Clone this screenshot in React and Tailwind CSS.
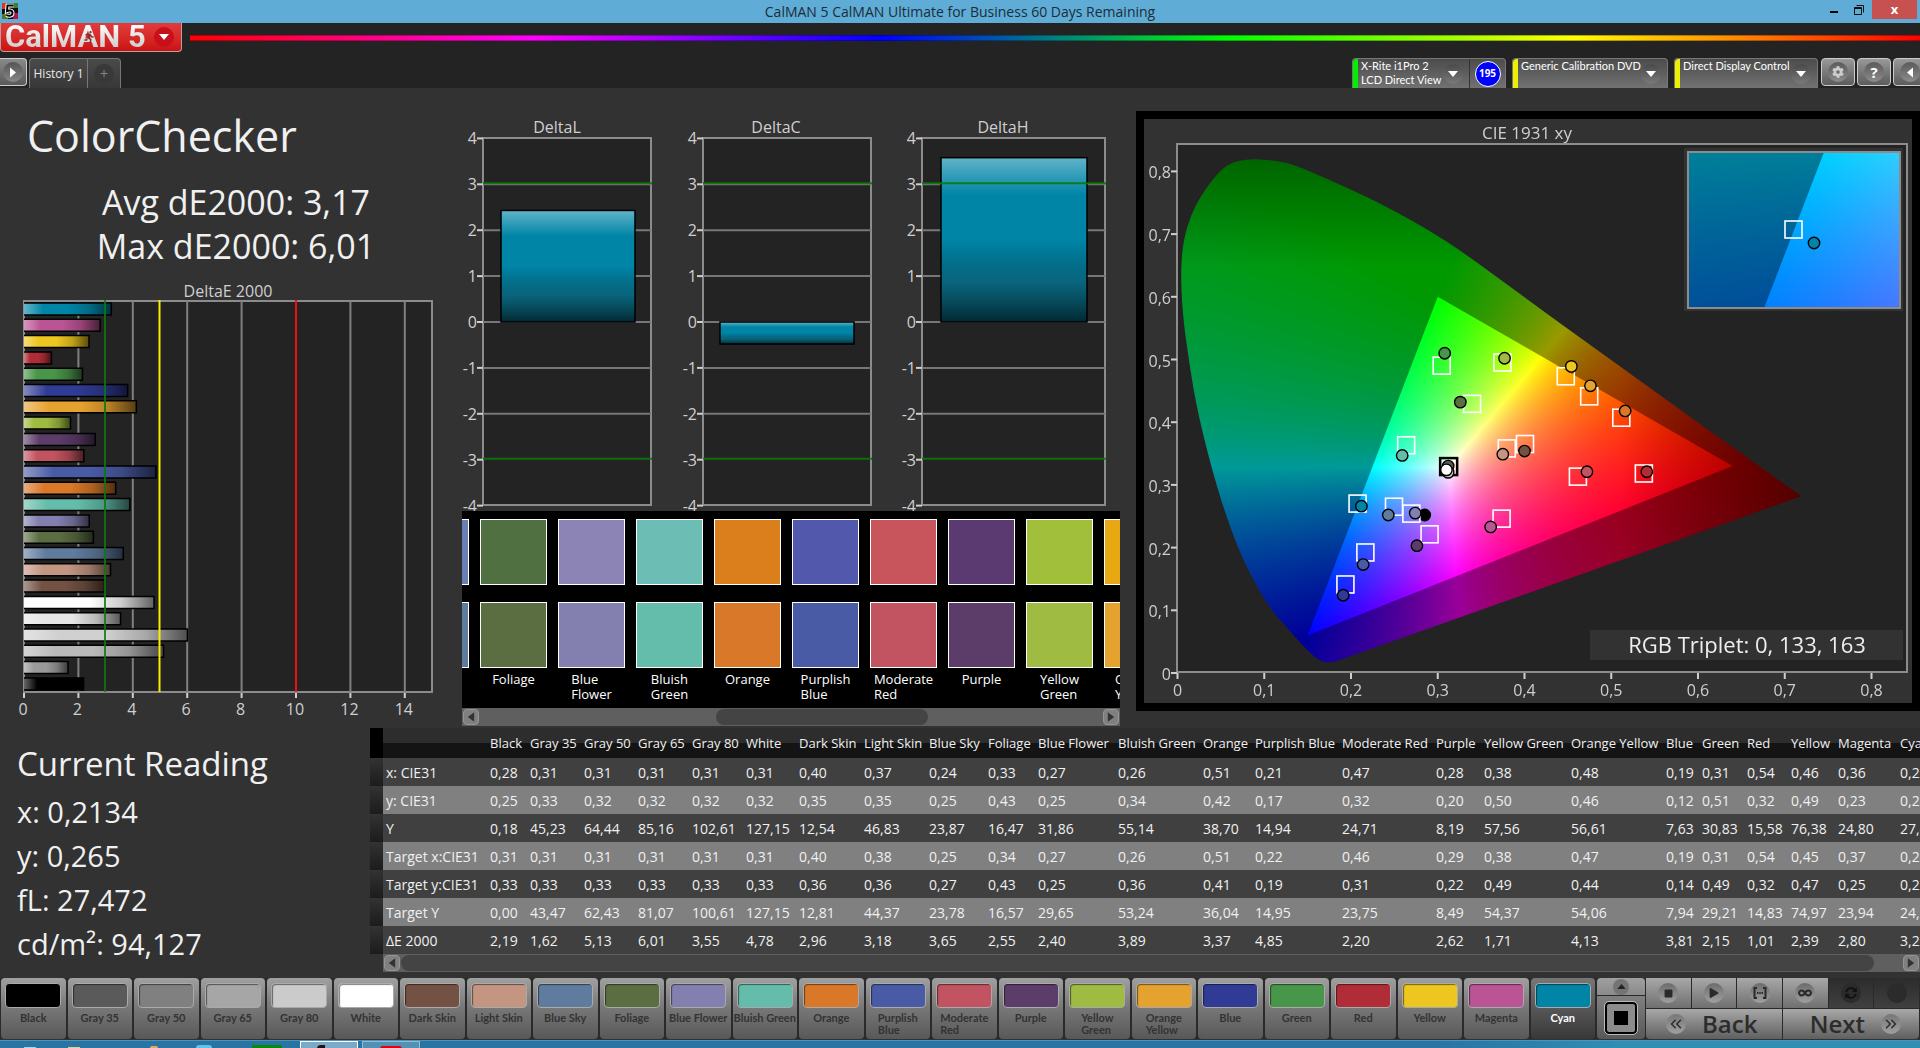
import React, { useEffect, useRef } from "react"
import { ChevronsLeft, ChevronsRight } from "lucide-react"
import { FaCog, FaInfinity, FaPlay, FaRunning, FaStop, FaSyncAlt } from "react-icons/fa"

// values follow rowLabels: measured x, y, Y, target x, y, Y, dE
const patches = [
  { name: "Black", color: "#000000", values: ["0,28", "0,25", "0,18", "0,31", "0,33", "0,00", "2,19"] },
  { name: "Gray 35", color: "#5a5a5a", bar: "#9a9a9a", values: ["0,31", "0,33", "45,23", "0,31", "0,33", "43,47", "1,62"] },
  { name: "Gray 50", color: "#808080", bar: "#b9b9b9", values: ["0,31", "0,32", "64,44", "0,31", "0,33", "62,43", "5,13"] },
  { name: "Gray 65", color: "#a6a6a6", bar: "#d0d0d0", values: ["0,31", "0,32", "85,16", "0,31", "0,33", "81,07", "6,01"] },
  { name: "Gray 80", color: "#cbcbcb", bar: "#e6e6e6", values: ["0,31", "0,32", "102,61", "0,31", "0,33", "100,61", "3,55"] },
  { name: "White", color: "#ffffff", values: ["0,31", "0,32", "127,15", "0,31", "0,33", "127,15", "4,78"] },
  { name: "Dark Skin", color: "#735244", values: ["0,40", "0,35", "12,54", "0,40", "0,36", "12,81", "2,96"] },
  { name: "Light Skin", color: "#c49682", values: ["0,37", "0,35", "46,83", "0,38", "0,36", "44,37", "3,18"] },
  { name: "Blue Sky", color: "#5f7c9e", measured: "#6a80b4", values: ["0,24", "0,25", "23,87", "0,25", "0,27", "23,78", "3,65"] },
  { name: "Foliage", color: "#5a6e42", measured: "#507042", values: ["0,33", "0,43", "16,47", "0,34", "0,43", "16,57", "2,55"] },
  { name: "Blue Flower", color: "#8380b0", measured: "#8c84b4", values: ["0,27", "0,25", "31,86", "0,27", "0,25", "29,65", "2,40"] },
  { name: "Bluish Green", color: "#64bdaa", measured: "#6cbdb4", values: ["0,26", "0,34", "55,14", "0,26", "0,36", "53,24", "3,89"] },
  { name: "Orange", color: "#d97829", measured: "#db7f1c", values: ["0,51", "0,42", "38,70", "0,51", "0,41", "36,04", "3,37"] },
  { name: "Purplish Blue", wrap: true, color: "#4a5ba5", measured: "#5258ac", values: ["0,21", "0,17", "14,94", "0,22", "0,19", "14,95", "4,85"] },
  { name: "Moderate Red", wrap: true, color: "#c25360", measured: "#c8555c", values: ["0,47", "0,32", "24,71", "0,46", "0,31", "23,75", "2,20"] },
  { name: "Purple", color: "#5c3c69", measured: "#5a3a70", values: ["0,28", "0,20", "8,19", "0,29", "0,22", "8,49", "2,62"] },
  { name: "Yellow Green", wrap: true, color: "#9fbb41", measured: "#a1bf3a", values: ["0,38", "0,50", "57,56", "0,38", "0,49", "54,37", "1,71"] },
  { name: "Orange Yellow", wrap: true, color: "#e6a22f", measured: "#e8a812", values: ["0,48", "0,46", "56,61", "0,47", "0,44", "54,06", "4,13"] },
  { name: "Blue", color: "#303b96", values: ["0,19", "0,12", "7,63", "0,19", "0,14", "7,94", "3,81"] },
  { name: "Green", color: "#489649", values: ["0,31", "0,51", "30,83", "0,31", "0,49", "29,21", "2,15"] },
  { name: "Red", color: "#b02d38", values: ["0,54", "0,32", "15,58", "0,54", "0,32", "14,83", "1,01"] },
  { name: "Yellow", color: "#edc71f", values: ["0,46", "0,49", "76,38", "0,45", "0,47", "74,97", "2,39"] },
  { name: "Magenta", color: "#bb5494", values: ["0,36", "0,23", "24,80", "0,37", "0,25", "23,94", "2,80"] },
  { name: "Cyan", color: "#0085a7", values: ["0,21", "0,27", "27,47", "0,20", "0,27", "24,81", "3,21"] },
]

const rowLabels = ["x: CIE31", "y: CIE31", "Y", "Target x:CIE31", "Target y:CIE31", "Target Y", "ΔE 2000"]

const columnWidths = [40, 54, 54, 54, 54, 53, 65, 65, 59, 50, 80, 85, 52, 87, 94, 48, 87, 95, 36, 45, 44, 47, 62, 60]

const toNumber = (text) => Number(text.replace(",", "."))

const DeltaEChart = () => {
  const left = 24
  const top = 21
  const unit = 27.2
  const rows = [...patches].reverse()

  return (
    <svg viewBox="0 0 462 440" className="mt-3 block w-full" role="img" aria-label="DeltaE 2000">
      <defs>
        <linearGradient id="shadeX">
          <stop offset="0" stopColor="#fff" stopOpacity="0.4" />
          <stop offset="0.22" stopColor="#fff" stopOpacity="0" />
          <stop offset="0.5" stopColor="#000" stopOpacity="0" />
          <stop offset="0.75" stopColor="#000" stopOpacity="0.2" />
          <stop offset="1" stopColor="#000" stopOpacity="0.62" />
        </linearGradient>
      </defs>
      <text x="228" y="17" fontSize="16" textAnchor="middle" fill="#cfcfcf">DeltaE 2000</text>
      <rect x={left} y={top} width="408" height="391" fill="#232323" stroke="#8c8c8c" strokeWidth="2" />
      {[2, 4, 6, 8, 10, 12, 14].map((v) => (
        <line key={v} x1={left + v * unit} x2={left + v * unit} y1={top} y2="412" stroke="#808080" strokeWidth="2" />
      ))}
      {rows.map((p, i) => {
        const width = toNumber(p.values[6]) * unit
        return (
          <g key={p.name}>
            <rect x={left} y={23 + i * 16.3} width={width} height="12" fill={p.bar || p.color} />
            <rect x={left} y={23 + i * 16.3} width={width} height="12" fill="url(#shadeX)" />
            <path d={`M${left} ${23 + i * 16.3}h${width}v12h${-width}`} fill="none" stroke="#000" strokeWidth="1.5" />
          </g>
        )
      })}
      <line x1="105" x2="105" y1="20" y2="412" stroke="#0a7a0a" strokeWidth="2" strokeOpacity="0.85" />
      <line x1="159.5" x2="159.5" y1="20" y2="412" stroke="#f5f000" strokeWidth="2" />
      <line x1="296" x2="296" y1="20" y2="412" stroke="#f01010" strokeWidth="2" />
      {[0, 2, 4, 6, 8, 10, 12, 14].map((v) => (
        <g key={v}>
          <line x1={left + v * unit} x2={left + v * unit} y1="413" y2="418" stroke="#cfcfcf" strokeWidth="2" />
          <text x={left + v * unit - 1} y="435" fontSize="16" textAnchor="middle" fill="#cfcfcf">{v}</text>
        </g>
      ))}
    </svg>
  )
}

const deltaCharts = [
  { title: "DeltaL", x: 21, width: 169, titleX: 95, value: 2.43, barX: 39, barWidth: 134 },
  { title: "DeltaC", x: 241, width: 169, titleX: 314, value: -0.48, barX: 258, barWidth: 134 },
  { title: "DeltaH", x: 460, width: 184, titleX: 541, value: 3.58, barX: 479, barWidth: 146 },
]

const DeltaCharts = () => {
  const zero = 202
  const unit = 45.9

  return (
    <svg viewBox="0 0 658 391" className="block w-full" role="img" aria-label="DeltaL, DeltaC and DeltaH">
      <defs>
        <linearGradient id="shadeY" x1="0" x2="0" y1="0" y2="1">
          <stop offset="0" stopColor="#fff" stopOpacity="0.38" />
          <stop offset="0.23" stopColor="#fff" stopOpacity="0" />
          <stop offset="0.5" stopColor="#000" stopOpacity="0" />
          <stop offset="0.75" stopColor="#1a2a30" stopOpacity="0.35" />
          <stop offset="1" stopColor="#000" stopOpacity="0.7" />
        </linearGradient>
      </defs>
      {deltaCharts.map((c) => {
        const barY = c.value > 0 ? zero - c.value * unit : zero
        const barHeight = Math.abs(c.value) * unit
        return (
          <g key={c.title}>
            <text x={c.titleX} y="13" fontSize="16" textAnchor="middle" fill="#cfcfcf">{c.title}</text>
            <rect x={c.x} y="18" width={c.width - 1} height="367" fill="#232323" stroke="#8c8c8c" strokeWidth="2" />
            {[3, 2, 1, 0, -1, -2].map((v) => (
              <line key={v} x1={c.x} x2={c.x + c.width - 1} y1={zero - v * unit} y2={zero - v * unit} stroke="#777" strokeWidth="2" />
            ))}
            {[4, 3, 2, 1, 0, -1, -2, -3, -4].map((v) => (
              <g key={v}>
                <line x1={c.x - 6} x2={c.x} y1={zero - v * unit} y2={zero - v * unit} stroke="#cfcfcf" strokeWidth="2" />
                <text x={c.x - 6} y={zero - v * unit + 6} fontSize="16" textAnchor="end" fill="#cfcfcf">{v}</text>
              </g>
            ))}
            <rect x={c.barX} y={barY} width={c.barWidth} height={barHeight} fill="#0085a7" />
            <rect x={c.barX} y={barY} width={c.barWidth} height={barHeight} fill="url(#shadeY)" stroke="#000" strokeWidth="1.5" />
            {[3, -3].map((v) => (
              <line key={v} x1={c.x} x2={c.x + c.width} y1={zero - v * unit - 1} y2={zero - v * unit - 1} stroke="#0a780a" strokeWidth="2" strokeOpacity="0.9" />
            ))}
          </g>
        )
      })}
    </svg>
  )
}

const ScrollBar = ({ thumb }) => (
  <div className="flex h-[18px] items-center bg-[#5f5f5f] px-px">
    <button aria-label="Scroll left" className="flex h-4 w-4 shrink-0 items-center justify-center rounded border border-[#959595] bg-[#808080]">
      <svg viewBox="0 0 10 12" className="h-3 w-2"><path d="M9 0v12L1 6z" fill="#333" /></svg>
    </button>
    <div className="h-4 flex-1">
      <div className={`h-4 rounded-lg bg-[#444] ${thumb}`} />
    </div>
    <button aria-label="Scroll right" className="flex h-4 w-4 shrink-0 items-center justify-center rounded border border-[#959595] bg-[#808080]">
      <svg viewBox="0 0 10 12" className="h-3 w-2"><path d="M1 0v12l8-6z" fill="#333" /></svg>
    </button>
  </div>
)

const SwatchStrip = () => (
  <div className="bg-black">
    <div className="h-[197px] overflow-hidden">
      <div className="-ml-[60px] flex gap-[11px] pt-2">
        {patches.slice(8, 18).map((p) => (
          <div key={p.name} className="w-[67px] shrink-0">
            <div className="h-[66px] border border-white" style={{ background: p.measured }} />
            <div className="mt-[17px] h-[66px] border border-white" style={{ background: p.color }} />
            <div className="mt-1 flex justify-center">
              <span className="w-min text-[13px] leading-[15px] text-white">{p.name}</span>
            </div>
          </div>
        ))}
      </div>
    </div>
    <ScrollBar thumb="ml-[38%] w-[34%]" />
  </div>
)

const locus = [
  [0.719, 0.282], [0.189, 0.0218], [0.18, 0.0175], [0.172, 0.0165], [0.163, 0.0203], [0.148, 0.038], [0.1241, 0.0758],
  [0.1096, 0.098], [0.0913, 0.1375], [0.0687, 0.2007], [0.0454, 0.295], [0.0235, 0.4127], [0.013, 0.498],
  [0.0055, 0.577], [0.0037, 0.647], [0.0073, 0.694], [0.016, 0.732], [0.028, 0.764], [0.0455, 0.796],
  [0.06, 0.8135], [0.081, 0.82], [0.11, 0.818], [0.134, 0.811], [0.169, 0.79], [0.2337, 0.75],
  [0.31, 0.69], [0.3731, 0.6265], [0.4441, 0.5547], [0.5125, 0.4866], [0.5752, 0.4242], [0.627, 0.3725],
]
const gamut = [[0.64, 0.33], [0.3, 0.6], [0.15, 0.06]]

const px = (x) => 33.5 + x * 867.5
const py = (y) => 554 - y * 627

// target and measured positions of every patch on the diagram
const points = [
  { target: [0.304, 0.491], read: [0.308, 0.51], color: "#489649" },
  { target: [0.374, 0.496], read: [0.377, 0.502], color: "#9fbb41" },
  { target: [0.447, 0.474], read: [0.454, 0.489], color: "#edc71f" },
  { target: [0.474, 0.442], read: [0.476, 0.458], color: "#e6a22f" },
  { target: [0.511, 0.408], read: [0.516, 0.418], color: "#d97829" },
  { target: [0.339, 0.43], read: [0.326, 0.432], color: "#5a6e42" },
  { target: [0.263, 0.364], read: [0.259, 0.347], color: "#64bdaa" },
  { target: [0.379, 0.359], read: [0.375, 0.349], color: "#c49682" },
  { target: [0.4, 0.366], read: [0.4, 0.354], color: "#735244" },
  { target: [0.537, 0.319], read: [0.541, 0.321], color: "#b02d38" },
  { target: [0.461, 0.314], read: [0.472, 0.321], color: "#c25360" },
  { target: [0.373, 0.247], read: [0.361, 0.233], color: "#bb5494" },
  { target: [0.29, 0.222], read: [0.276, 0.203], color: "#5c3c69" },
  { target: null, read: [0.285, 0.252], color: "#000000" },
  { target: [0.269, 0.255], read: [0.274, 0.255], color: "#8380b0" },
  { target: [0.249, 0.266], read: [0.243, 0.252], color: "#5f7c9e" },
  { target: [0.207, 0.271], read: [0.212, 0.266], color: "#0085a7" },
  { target: [0.216, 0.193], read: [0.214, 0.173], color: "#4a5ba5" },
  { target: [0.193, 0.142], read: [0.191, 0.124], color: "#303b96" },
  { target: [0.312, 0.33], read: [0.312, 0.33], color: "#5a5a5a", white: true },
  { target: null, read: [0.312, 0.32], color: "#cbcbcb" },
  { target: null, read: [0.31, 0.324], color: "#ffffff" },
]

const xyToRgb = (x, y, level) => {
  const z = 1 - x - y
  const r = Math.max(0, 3.2406 * x - 1.5372 * y - 0.4986 * z)
  const g = Math.max(0, -0.9689 * x + 1.8758 * y + 0.0415 * z)
  const b = Math.max(0, 0.0557 * x - 0.204 * y + 1.057 * z)
  const fade = 1 - Math.max(0, x - 0.51) * 2.2 - Math.max(0, y - 0.65) * 2
  const k = (255 * level * fade) / Math.max(r, g, b)
  return [r * k, g * k, b * k]
}

const makeLayer = (width, height, xAt, yAt, level) => {
  const layer = document.createElement("canvas")
  layer.width = width
  layer.height = height
  const ctx = layer.getContext("2d")
  const image = ctx.createImageData(width, height)
  for (let j = 0; j < height; j++) {
    for (let i = 0; i < width; i++) {
      const rgb = xyToRgb(xAt(i), yAt(j), level)
      image.data.set([...rgb, 255], (j * width + i) * 4)
    }
  }
  ctx.putImageData(image, 0, 0)
  return layer
}

const trace = (ctx, list, toX, toY) => {
  ctx.beginPath()
  list.forEach(([x, y]) => ctx.lineTo(toX(x), toY(y)))
  ctx.closePath()
}

// straight purple line, midpoint curves along the rest of the locus
const traceLocus = (ctx) => {
  ctx.beginPath()
  ctx.moveTo(px(locus[0][0]), py(locus[0][1]))
  for (let i = 1; i < locus.length - 1; i++) {
    const [x, y] = locus[i]
    const [nx, ny] = locus[i + 1]
    ctx.quadraticCurveTo(px(x), py(y), px((x + nx) / 2), py((y + ny) / 2))
  }
  ctx.closePath()
}

const CieDiagram = () => {
  const canvasRef = useRef(null)

  useEffect(() => {
    const ctx = canvasRef.current.getContext("2d")
    const xAt = (i) => (i - 33.5) / 867.5
    const yAt = (j) => (554 - j) / 627

    ctx.fillStyle = "#232323"
    ctx.fillRect(34, 25, 729, 528)

    ctx.save()
    traceLocus(ctx)
    ctx.clip()
    ctx.drawImage(makeLayer(768, 584, xAt, yAt, 0.6), 0, 0)
    trace(ctx, gamut, px, py)
    ctx.clip()
    ctx.drawImage(makeLayer(768, 584, xAt, yAt, 1), 0, 0)
    ctx.restore()

    // magnified view around the current patch
    const zoomX = (i) => 0.2083 + (i - 106) / 3470
    const zoomY = (j) => 0.271 - (j - 78) / 2508
    ctx.fillStyle = "#323232"
    ctx.fillRect(540, 29, 219, 163)
    ctx.drawImage(makeLayer(212, 156, zoomX, zoomY, 0.6), 544, 33)
    ctx.save()
    ctx.beginPath()
    ctx.rect(544, 33, 212, 156)
    ctx.clip()
    trace(ctx, gamut, (x) => 649 + (x - 0.2083) * 3470, (y) => 111 - (y - 0.271) * 2508)
    ctx.clip()
    ctx.drawImage(makeLayer(212, 156, zoomX, zoomY, 1), 544, 33)
    ctx.restore()
  }, [])

  return (
    <div className="relative">
      <canvas ref={canvasRef} width="768" height="584" className="block w-full" />
      <svg viewBox="0 0 768 584" className="absolute inset-0 h-full w-full" role="img" aria-label="CIE 1931 xy">
        <text x="383" y="20" fontSize="17" textAnchor="middle" fill="#cfcfcf">CIE 1931 xy</text>
        <rect x="33" y="25" width="730" height="528" fill="none" stroke="#8c8c8c" strokeWidth="2" />
        {[0, 1, 2, 3, 4, 5, 6, 7, 8].map((v) => (
          <g key={v} fill="#cfcfcf" stroke="none" fontSize="16">
            <rect x={px(v / 10) - 1} y="554" width="2" height="6" />
            <rect x="27" y={py(v / 10) - 1} width="6" height="2" />
            <text x={px(v / 10)} y="577" textAnchor="middle">{v ? `0,${v}` : "0"}</text>
            <text x="27" y={py(v / 10) + 7} textAnchor="end">{v ? `0,${v}` : "0"}</text>
          </g>
        ))}
        {points.map((p, i) => (
          <g key={i}>
            {p.target && (
              <rect x={px(p.target[0]) - 8} y={py(p.target[1]) - 8} width="17" height="17" fill="none" stroke={p.white ? "#000" : "#fff"} strokeWidth={p.white ? 2.5 : 1.6} />
            )}
            <circle cx={px(p.read[0])} cy={py(p.read[1])} r="5.7" fill={p.color} stroke="#000" strokeWidth="1.4" />
          </g>
        ))}
        <rect x="544" y="33" width="212" height="156" fill="none" stroke="#8c8c8c" strokeWidth="2" />
        <rect x="641" y="102" width="17" height="17" fill="none" stroke="#fff" strokeWidth="1.6" />
        <circle cx="670" cy="124" r="5.7" fill="#0085a7" stroke="#000" strokeWidth="1.4" />
        <rect x="446" y="511" width="313" height="30" fill="#323232" />
        <text x="603" y="534" fontSize="22" textAnchor="middle" fill="#eee">RGB Triplet: 0, 133, 163</text>
      </svg>
    </div>
  )
}

const ReadingsTable = () => (
  <div className="min-w-0 overflow-hidden">
    <table className="w-[1583px] table-fixed border-collapse text-left text-[14px] whitespace-nowrap text-[#f0f0f0]">
      <colgroup>
        <col className="w-[13px]" />
        <col className="w-[104px]" />
        {columnWidths.map((w, i) => <col key={i} style={{ width: w }} />)}
      </colgroup>
      <thead>
        <tr className="h-[30px] bg-linear-to-b from-[#2d2d2d] from-50% to-[#141414] to-50%">
          <th className="bg-black" />
          <th />
          {patches.map((p) => <th key={p.name} scope="col" className="p-0 pt-[2px] pl-[3px] text-[13px] font-normal">{p.name}</th>)}
        </tr>
      </thead>
      <tbody>
        {rowLabels.map((label, row) => (
          <tr key={label} className="h-[28px] odd:bg-[#404040] even:bg-[#808080]">
            <td className="bg-linear-to-b from-[#333] to-[#1c1c1c]" />
            <th scope="row" className="p-0 pl-[3px] font-normal">{label}</th>
            {patches.map((p) => <td key={p.name} className="p-0 pl-[3px]">{p.values[row]}</td>)}
          </tr>
        ))}
      </tbody>
    </table>
    <div className="ml-[13px]">
      <ScrollBar thumb="ml-px w-[98%]" />
    </div>
  </div>
)

const DropArrow = () => (
  <span className="flex h-5 w-5 shrink-0 items-center justify-center rounded-full bg-linear-to-b from-[#4a4a4a] to-[#7a7a7a]">
    <svg viewBox="0 0 10 6" className="h-[6px] w-[10px]"><path d="M0 0h10L5 6z" fill="#fff" /></svg>
  </span>
)

const DeviceTab = ({ stripe, lines, width, badge }) => (
  <div className={`flex h-[30px] items-stretch rounded-t border-x border-t border-[#777] bg-linear-to-b from-[#4c4c4c] to-[#727272] ${width}`}>
    <button className="flex min-w-0 flex-1 items-stretch text-left">
      <span className={`w-[5px] rounded-tl-sm ${stripe}`} />
      <span className="min-w-0 flex-1 pl-[3px] font-[Lato] text-[11px] leading-[14px] whitespace-nowrap text-white">
        {lines.map((line) => <span key={line} className="block">{line}</span>)}
      </span>
      <span className="flex items-center pr-[6px]"><DropArrow /></span>
    </button>
    {badge && (
      <span className="flex w-9 items-center justify-center border-l border-[#333]">
        <span className="flex h-[26px] w-[26px] items-center justify-center rounded-full border border-white bg-[#0000ff] text-[10px] font-bold text-white">{badge}</span>
      </span>
    )}
  </div>
)

const RoundButton = ({ label, children }) => (
  <button aria-label={label} className="flex h-7 w-[34px] shrink-0 items-center justify-center rounded border border-[#ccc] bg-linear-to-b from-[#999] to-[#5c5c5c]">
    <span className="flex h-5 w-5 items-center justify-center rounded-full bg-linear-to-b from-[#5a5a5a] to-[#8c8c8c] text-[15px] font-bold text-white">{children}</span>
  </button>
)

const Header = () => (
  <header className="bg-[#232323]">
    <div className="flex h-[29px] items-start gap-2">
      <button aria-label="CalMAN 5 menu" className="relative flex h-[29px] w-[182px] items-center justify-between rounded-b border border-t-0 border-[#b9a0a0] bg-linear-to-b from-[#e03c3c] to-[#cc1010] pr-[7px] pl-1">
        <span className="bg-linear-to-b from-white to-[#c8c8c8] bg-clip-text font-[Roboto] text-[31px] leading-[26px] font-bold whitespace-nowrap text-transparent">CalMAN 5</span>
        <FaRunning className="absolute top-[8px] left-[82px] h-3 w-3 text-[#8c3030]" />
        <span className="flex h-5 w-5 items-center justify-center rounded-full bg-[#c8101c]">
          <svg viewBox="0 0 10 6" className="h-[6px] w-[10px]"><path d="M0 0h10L5 6z" fill="#fff" /></svg>
        </span>
      </button>
      <div className="mt-3 h-[6px] flex-1 border-y border-black/30 bg-[linear-gradient(to_right,#f00,#f0f,#00f,#0f0,#ff0,#f00)]" />
    </div>
    <div className="mt-[6px] flex items-start">
      <button aria-label="Expand" className="flex h-7 w-[27px] items-center justify-center rounded-r border border-l-0 border-[#ccc] bg-linear-to-b from-[#8a8a8a] to-[#5a5a5a]">
        <span className="flex h-5 w-5 items-center justify-center rounded-full bg-linear-to-b from-[#555] to-[#888]">
          <svg viewBox="0 0 6 10" className="h-[11px] w-[6px]"><path d="M0 0v10l6-5z" fill="#fff" /></svg>
        </span>
      </button>
      <nav className="ml-[2px] flex h-[30px] rounded-t border-x border-t border-[#777] bg-linear-to-b from-[#4a4a4a] to-[#383838] text-[12px] text-[#e8e8e8]">
        <button className="w-[58px] border-r border-[#777]">History 1</button>
        <button aria-label="Add tab" className="flex w-8 items-center justify-center">
          <span className="flex h-5 w-5 items-center justify-center rounded-full bg-[#393939] text-[14px] text-[#888]">+</span>
        </button>
      </nav>
      <div className="ml-auto flex items-start gap-[6px]">
        <DeviceTab stripe="bg-[#00f000]" lines={["X-Rite i1Pro 2", "LCD Direct View"]} width="w-[154px]" badge="195" />
        <DeviceTab stripe="bg-[#eeee00]" lines={["Generic Calibration DVD"]} width="w-[156px]" />
        <DeviceTab stripe="bg-[#eeee00]" lines={["Direct Display Control"]} width="w-[144px]" />
        <div className="-ml-[3px] flex w-[99px] gap-[2px] overflow-hidden">
          <RoundButton label="Settings"><FaCog className="h-3 w-3 text-[#ccc]" /></RoundButton>
          <RoundButton label="Help">?</RoundButton>
          <RoundButton label="Collapse">
            <svg viewBox="0 0 6 10" className="h-[11px] w-[6px]"><path d="M6 0v10L0 5z" fill="#fff" /></svg>
          </RoundButton>
        </div>
      </div>
    </div>
  </header>
)

const TitleBar = () => (
  <div className="flex h-[23px] items-start bg-[#5fadd6] text-[#1c2c38]">
    <svg viewBox="0 0 16 16" className="mt-[3px] ml-[2px] h-4 w-4" aria-hidden="true">
      <rect width="16" height="16" fill="#111" />
      <path d="M0 0h5v6H0z" fill="#d43a1a" />
      <path d="M11 0h5v5h-5z" fill="#3f7f35" />
      <path d="M0 11h6v5H0z" fill="#4b7a20" />
      <path d="M11 10h5v6h-5z" fill="#a81650" />
      <path d="M11.500 2.500H5.500L5 8c2-1 5.500-.8 5.500 2S7 13.500 4.500 12" fill="none" stroke="#fff" strokeWidth="4" />
      <path d="M11.500 2.500H5.500L5 8c2-1 5.500-.8 5.500 2S7 13.500 4.500 12" fill="none" stroke="#000" strokeWidth="2" />
    </svg>
    <h1 className="ml-20 flex-1 text-center text-[14px] leading-[23px]">CalMAN 5 CalMAN Ultimate for Business 60 Days Remaining</h1>
    <button aria-label="Minimize" className="flex h-[19px] w-6 items-center justify-center pt-1"><span className="h-[2px] w-2 bg-black" /></button>
    <button aria-label="Restore" className="flex h-[19px] w-[26px] items-center justify-center">
      <svg viewBox="0 0 10 10" className="h-[10px] w-[10px]" fill="none" stroke="#111"><path d="M.500 2.500h7v7h-7zM.500 3.500h7M2.500.500h7v7" /></svg>
    </button>
    <button aria-label="Close" className="mr-[3px] h-[19px] w-[45px] bg-[#c75050] text-[13px] leading-[17px] font-bold text-white">x</button>
  </div>
)

const PatchButton = ({ patch, active }) => (
  <button className={`mx-px flex h-[61px] flex-col items-center overflow-hidden rounded pt-[5px] ${active ? "bg-linear-to-b from-[#777] to-[#383838] text-white" : "bg-linear-to-b from-[#a0a0a0] via-[#777] to-[#585858] text-[#333]"}`}>
    <span className="h-[25px] w-14 shrink-0 rounded border border-[#aaa] shadow-[inset_1px_1px_1px_rgba(0,0,0,0.5)]" style={{ background: patch.color }} />
    <span className="flex w-full justify-center pt-1">
      <span className={`text-left font-[Lato] text-[11px] leading-[12px] font-bold ${patch.wrap ? "w-min" : "whitespace-nowrap"}`}>{patch.name}</span>
    </span>
  </button>
)

const controls = [
  { label: "Stop", icon: <FaStop className="h-[9px] w-[9px]" /> },
  { label: "Play", icon: <FaPlay className="h-[10px] w-[10px]" /> },
  {
    label: "Read series",
    icon: (
      <svg viewBox="0 0 14 12" className="h-3 w-[14px]" fill="none" stroke="currentColor" strokeWidth="2">
        <path d="M4 1H1.500v10H4M10 1h2.500v10H10M4 6h1.500M6.300 6h1.400M8.500 6H10" />
      </svg>
    ),
  },
  { label: "Continuous", icon: <FaInfinity className="h-[14px] w-[14px]" /> },
  { label: "Refresh", icon: <FaSyncAlt className="h-3 w-3" />, off: true },
  { label: "Unused", icon: null, off: true },
]

const Toolbar = () => (
  <footer className="flex h-[61px] bg-[#2a2a2a]">
    <div className="grid flex-1 grid-cols-24">
      {patches.map((p) => <PatchButton key={p.name} patch={p} active={p.name === "Cyan"} />)}
    </div>
    <div className="mr-px ml-px flex w-12 flex-col gap-px">
      <button aria-label="Scroll up" className="flex h-[17px] items-center justify-center rounded-t bg-linear-to-b from-[#a0a0a0] to-[#8a8a8a]">
        <span className="flex h-4 w-4 items-center justify-center rounded-full bg-[#747474]">
          <svg viewBox="0 0 10 6" className="h-[5px] w-[9px]"><path d="M0 6h10L5 0z" fill="#222" /></svg>
        </span>
      </button>
      <button aria-label="Pattern window" className="flex flex-1 items-center justify-center rounded-b bg-linear-to-b from-[#808080] to-[#585858]">
        <span className="flex h-8 w-8 items-center justify-center rounded border-2 border-black bg-[#8c8c8c] outline outline-[#bbb]">
          <span className="h-[14px] w-[14px] bg-black" />
        </span>
      </button>
    </div>
    <div className="flex w-[274px] flex-col gap-px pr-px">
      <div className="grid h-[30px] grid-cols-6 gap-px">
        {controls.map((c) => (
          <button key={c.label} aria-label={c.label} className={`flex items-center justify-center ${c.off ? "bg-linear-to-b from-[#2c2c2c] to-[#404040] text-[#111]" : "bg-linear-to-b from-[#a8a8a8] to-[#707070] text-[#2a2a2a]"}`}>
            <span className={`flex h-5 w-5 items-center justify-center rounded-full ${c.off ? "bg-[#2b2b2b]" : "bg-linear-to-b from-[#6c6c6c] to-[#a0a0a0]"}`}>{c.icon}</span>
          </button>
        ))}
      </div>
      <div className="grid h-[30px] grid-cols-2 gap-px text-[24px] leading-[30px] font-semibold text-[#2c2c2c]">
        <button className="flex items-center gap-4 rounded-bl bg-linear-to-b from-[#a8a8a8] to-[#606060] pl-5">
          <span className="flex h-5 w-5 items-center justify-center rounded-full bg-linear-to-b from-[#777] to-[#a0a0a0]"><ChevronsLeft className="h-[18px] w-[18px]" /></span>
          Back
        </button>
        <button className="flex items-center justify-end gap-4 rounded-br bg-linear-to-b from-[#a8a8a8] to-[#606060] pr-[18px]">
          Next
          <span className="flex h-5 w-5 items-center justify-center rounded-full bg-linear-to-b from-[#777] to-[#a0a0a0]"><ChevronsRight className="h-[18px] w-[18px]" /></span>
        </button>
      </div>
    </div>
  </footer>
)

const TaskBar = () => (
  <div className="mt-px flex h-2 items-end overflow-hidden border-t border-[#4a94bd] bg-linear-to-r from-[#2a74a3] from-75% to-[#2f90b4] to-85%">
    <span className="ml-6 h-px w-3 rounded-full bg-[#a8d4ea]" />
    <span className="ml-8 h-px w-3 bg-[#e0d080]" />
    <span className="ml-[70px] h-[2px] w-2 rounded-t-full bg-[#e8a860]" />
    <span className="ml-[38px] h-[3px] w-4 rounded-t-full bg-[#5fc4ee]" />
    <span className="ml-10 h-[3px] w-[30px] bg-[#0a8a0a]" />
    <span className="ml-[18px] flex h-[7px] w-[58px] justify-center border border-b-0 border-white bg-[#7aaac8]"><span className="mt-[3px] mr-4 h-1 w-2 rounded-tl-full bg-[#201010]" /></span>
    <span className="ml-1 flex h-[7px] w-[58px] justify-center border border-b-0 border-[#8ebcd4] bg-[#5490b4]"><span className="mt-[4px] h-[3px] w-[22px] rounded-t bg-[#e00010]" /></span>
  </div>
)

const App = () => {
  return (
    <div className="flex min-h-screen flex-col overflow-hidden bg-[#323232] font-['Open_Sans','Noto_Sans',sans-serif]">
      <TitleBar />
      <Header />
      <main className="flex-1 bg-[#323232] text-[#f0f0f0]">
        <div className="grid grid-cols-[minmax(0,462fr)_minmax(0,658fr)_minmax(0,800fr)] pb-[2px]">
          <section>
            <h2 className="pt-5 pl-[27px] text-[43px] leading-[56px]">ColorChecker</h2>
            <div className="mt-4 pl-[10px] text-center text-[34px] leading-[44px]">
              <p>Avg dE2000: 3,17</p>
              <p>Max dE2000: 6,01</p>
            </div>
            <DeltaEChart />
          </section>
          <section className="pt-8">
            <DeltaCharts />
            <SwatchStrip />
          </section>
          <section className="pt-[23px] pl-4">
            <div className="border-8 border-black bg-[#323232]">
              <CieDiagram />
            </div>
          </section>
        </div>
        <div className="grid grid-cols-[370px_minmax(0,1fr)] pb-1">
          <section className="pt-[14px] pl-[17px] text-[29px] leading-[44px]">
            <h2 className="text-[33px]">Current Reading</h2>
            <div className="pt-1">
              <p>x: 0,2134</p>
              <p>y: 0,265</p>
              <p>fL: 27,472</p>
              <p>cd/m²: 94,127</p>
            </div>
          </section>
          <ReadingsTable />
        </div>
      </main>
      <Toolbar />
      <TaskBar />
    </div>
  )
}

export default App
